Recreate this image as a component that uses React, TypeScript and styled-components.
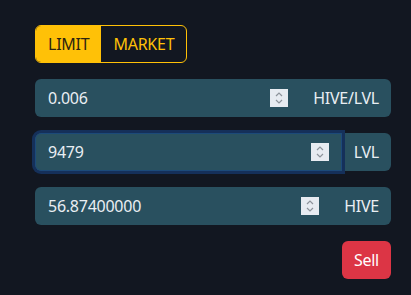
import React from 'react'
import styled, { createGlobalStyle, css } from 'styled-components'

const GlobalStyle = createGlobalStyle`
  html, body {
    margin: 0;
    padding: 0;
    background: #121721;
  }
  body {
    font-family: "Noto Sans", "Open Sans", sans-serif;
    letter-spacing: -0.25px;
    color: #e6edf3;
  }
`

const Page = styled.div`
  width: 411px;
  height: 295px;
  box-sizing: border-box;
  padding: 25px 20px 0 35px;
  display: flex;
  flex-direction: column;
  gap: 16px;
`

const Toggle = styled.div`
  display: flex;
  align-self: flex-start;
  height: 38px;
  border: 1px solid #ffc107;
  border-radius: 6px;
  overflow: hidden;
  box-sizing: border-box;
`

const ToggleButton = styled.button<{ $active?: boolean }>`
  font: inherit;
  font-size: 16px;
  letter-spacing: inherit;
  border: none;
  padding: 0 12px;
  cursor: pointer;
  background: transparent;
  color: #ffc107;
  ${(p) =>
    p.$active &&
    css`
      background: #ffc107;
      color: #2b2410;
    `}
`

const Group = styled.div`
  display: flex;
  height: 38px;
  border-radius: 6px;
  background: #29505f;
`

const Field = styled.label<{ $focused?: boolean }>`
  flex: 1;
  min-width: 0;
  display: flex;
  align-items: center;
  padding: 0 12px;
  border: 1px solid transparent;
  border-radius: 6px 0 0 6px;
  ${(p) =>
    p.$focused &&
    css`
      border-color: #1c4a7a;
      box-shadow: 0 0 0 3px #15305a;
      position: relative;
    `}
`

const Input = styled.input`
  flex: 1;
  min-width: 0;
  width: 0;
  background: transparent;
  border: none;
  outline: none;
  font: inherit;
  font-size: 16px;
  letter-spacing: inherit;
  color: #e9eef3;
  padding: 0;
  caret-color: #e9eef3;
`

const Spinner = styled.span`
  width: 18px;
  height: 18px;
  background: #e7ebf1;
  display: flex;
  align-items: center;
  justify-content: center;
  flex-shrink: 0;
`

const Unit = styled.span`
  display: flex;
  align-items: center;
  flex-shrink: 0;
  white-space: nowrap;
  padding: 0 12px;
  font-size: 16px;
  color: #e9eef3;
`

const Footer = styled.div`
  display: flex;
  justify-content: flex-end;
`

const SellButton = styled.button`
  font: inherit;
  font-size: 16px;
  letter-spacing: inherit;
  height: 38px;
  padding: 0 12px;
  border: none;
  border-radius: 6px;
  background: #dc3545;
  color: #fff;
`

const SpinIcon = () => (
  <svg width="10" height="14" viewBox="0 0 10 14" fill="none" stroke="#8d939b" strokeWidth="1.2">
    <path d="M2 5 L5 2 L8 5" />
    <path d="M2 9 L5 12 L8 9" />
  </svg>
)

const rows = [
  { value: '0.006', unit: 'HIVE/LVL' },
  { value: '9479', unit: 'LVL', focused: true },
  { value: '56.87400000', unit: 'HIVE' },
]

export default function App() {
  return (
    <>
      <GlobalStyle />
      <Page>
        <Toggle>
          <ToggleButton $active>LIMIT</ToggleButton>
          <ToggleButton>MARKET</ToggleButton>
        </Toggle>
        {rows.map((r) => (
          <Group key={r.unit}>
            <Field $focused={r.focused}>
              <Input defaultValue={r.value} autoFocus={r.focused} />
              <Spinner>
                <SpinIcon />
              </Spinner>
            </Field>
            <Unit>{r.unit}</Unit>
          </Group>
        ))}
        <Footer>
          <SellButton>Sell</SellButton>
        </Footer>
      </Page>
    </>
  )
}
